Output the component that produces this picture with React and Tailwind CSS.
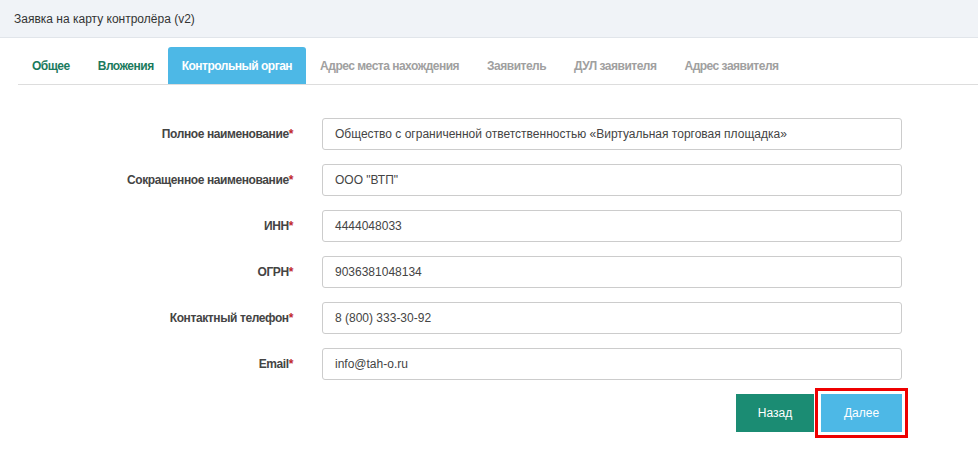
export default function App() {
  const tabs = [
    { label: "Общее", state: "done" },
    { label: "Вложения", state: "done" },
    { label: "Контрольный орган", state: "active" },
    { label: "Адрес места нахождения", state: "todo" },
    { label: "Заявитель", state: "todo" },
    { label: "ДУЛ заявителя", state: "todo" },
    { label: "Адрес заявителя", state: "todo" },
  ];

  const fields = [
    { label: "Полное наименование", value: "Общество с ограниченной ответственностью «Виртуальная торговая площадка»" },
    { label: "Сокращенное наименование", value: 'ООО "ВТП"' },
    { label: "ИНН", value: "4444048033" },
    { label: "ОГРН", value: "9036381048134" },
    { label: "Контактный телефон", value: "8 (800) 333-30-92" },
    { label: "Email", value: "info@tah-o.ru" },
  ];

  return (
    <div className="min-h-[470px] bg-white font-['Liberation_Sans',Arial,sans-serif] text-[#333]">
      <div className="h-[38px] bg-[#f0f3f7] border-b border-[#e1e5ea] pl-[14px] flex items-center text-[12px] text-[#333]">
        Заявка на карту контролёра (v2)
      </div>

      <div className="pl-[18px] pt-[9px]">
        <div className="flex border-b border-[#ddd] h-[38px]">
          {tabs.map((t) => (
            <div
              key={t.label}
              className={
                t.state === "active"
                  ? "px-[14px] flex items-center text-[12px] font-bold tracking-[-0.5px] rounded-t-[3px] bg-[#4db8e6] text-white"
                  : t.state === "done"
                  ? "px-[14px] flex items-center text-[12px] font-bold tracking-[-0.5px] text-[#1b7a5d]"
                  : "px-[14px] flex items-center text-[12px] font-bold tracking-[-0.5px] text-[#a0a0a0]"
              }
            >
              {t.label}
            </div>
          ))}
        </div>

        <div className="w-[884px] pt-[33px] flex flex-col gap-[14px]">
          {fields.map((f) => (
            <div key={f.label} className="grid grid-cols-[275px_580px] gap-[29px] items-center">
              <div className="text-right text-[12px] font-bold tracking-[-0.4px] text-[#444]">
                {f.label}
                <span className="text-[#c0282d]">*</span>
              </div>
              <div className="h-[32px] border border-[#ccc] rounded-[3px] px-[12px] flex items-center text-[12px] text-[#444]">
                {f.value}
              </div>
            </div>
          ))}

          <div className="flex justify-end gap-[7px]">
            <button className="w-[78px] h-[38px] bg-[#1b8c73] text-white text-[12px]">Назад</button>
            <button className="w-[81px] h-[38px] bg-[#4db8e6] text-white text-[12px] outline-[3px] outline-solid outline-[#ee0000] outline-offset-[3px]">
              Далее
            </button>
          </div>
        </div>
      </div>
    </div>
  );
}
